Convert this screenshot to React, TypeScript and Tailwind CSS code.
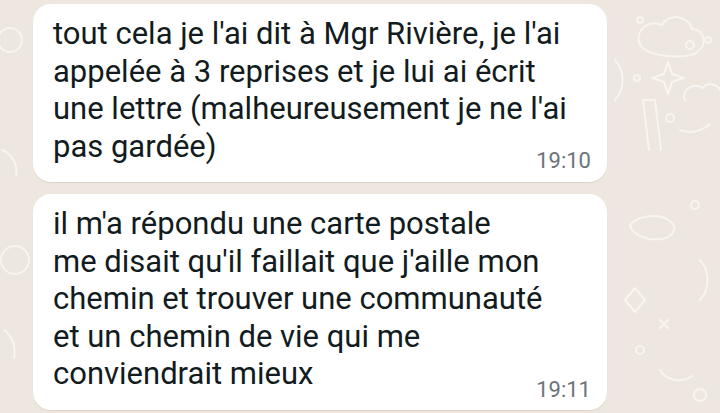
import React from "react";

const messages = [
  {
    lines: [
      "tout cela je l'ai dit à Mgr Rivière, je l'ai",
      "appelée à 3 reprises et je lui ai écrit",
      "une lettre (malheureusement je ne l'ai",
      "pas gardée)",
    ],
    time: "19:10",
    tail: "mt-[-16px] pb-[9px]",
  },
  {
    lines: [
      "il m'a répondu une carte postale",
      "me disait qu'il faillait que j'aille mon",
      "chemin et trouver une communauté",
      "et un chemin de vie qui me",
      "conviendrait mieux",
    ],
    time: "19:11",
    tail: "mt-[-15px] pb-[8px]",
  },
];

function Doodles() {
  return (
    <svg
      className="absolute inset-0 w-full h-full"
      viewBox="0 0 720 413"
      fill="none"
      stroke="#f8f5f1"
      strokeWidth={2}
      strokeLinecap="round"
      strokeLinejoin="round"
    >
      {/* cloud */}
      <path d="M640 45c-6-14 8-26 22-20 6-12 26-10 30 4 12 0 16 16 6 22-4 8-48 8-58-6z" />
      <circle cx="690" cy="45" r="4" />
      <circle cx="708" cy="40" r="3" />
      <circle cx="640" cy="20" r="3" />
      {/* sparkle */}
      <path d="M668 62l4 12 12 4-12 4-4 12-4-12-12-4 12-4z" />
      <circle cx="637" cy="78" r="3" />
      <path d="M615 60c10 10 10 30 0 40" />
      <path d="M685 100c-4-10 8-18 18-12 4-6 14-4 17 2" />
      {/* pencil */}
      <path d="M643 100l6 50M655 100l6 50M643 100h12" />
      <circle cx="670" cy="118" r="4" />
      <path d="M680 130c10 4 20 2 30-6" />
      {/* lower right */}
      <path d="M630 225c8-10 30-12 40-4 8 6 4 16-8 18-14 2-30-4-32-14z" />
      <circle cx="695" cy="205" r="4" />
      <path d="M700 260c10 10 10 30 0 40" />
      <path d="M625 300l10 -12 10 12-10 12z" />
      <path d="M660 320l8 8M668 320l-8 8" />
      <circle cx="640" cy="350" r="4" />
      <path d="M660 370c6 10 20 14 32 6" />
      <circle cx="700" cy="395" r="6" />
      {/* left edge */}
      <circle cx="10" cy="40" r="12" />
      <path d="M2 150c10 4 16 14 14 26" />
      <circle cx="15" cy="260" r="14" />
      <path d="M4 330c8 6 12 16 10 28" />
    </svg>
  );
}

export default function App() {
  return (
    <div
      className="relative w-[720px] h-[413px] overflow-hidden bg-[#ede7df]"
      style={{ fontFamily: "Roboto, 'Noto Sans', sans-serif" }}
    >
      <Doodles />
      <div className="relative flex flex-col gap-[12px] pt-[4px] pl-[33px]">
        {messages.map((m, i) => (
          <div
            key={i}
            className={`w-[574px] bg-white rounded-[18px] pl-[20px] pr-[16px] pt-[11px] shadow-[0_1px_1px_rgba(0,0,0,0.08)] ${m.tail.split(" ")[1]}`}
          >
            <div className="text-[31px] leading-[37.5px] text-[#121b20]">
              {m.lines.map((l, j) => (
                <div key={j} className="whitespace-nowrap">
                  {l}
                </div>
              ))}
            </div>
            <div className={`flex justify-end ${m.tail.split(" ")[0]}`}>
              <span className="text-[22px] leading-[24px] text-[#6b7479]">{m.time}</span>
            </div>
          </div>
        ))}
      </div>
    </div>
  );
}
